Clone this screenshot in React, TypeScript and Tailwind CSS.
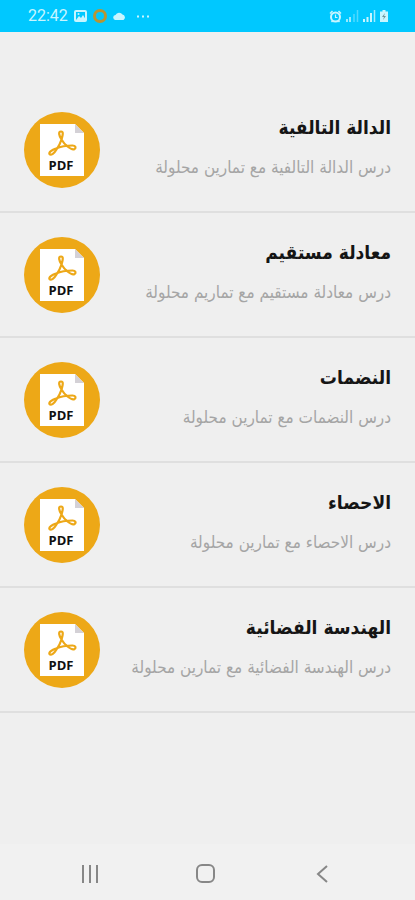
const lessons = [
  { title: "الدالة التالفية", detail: "درس الدالة التالفية مع تمارين محلولة" },
  { title: "معادلة مستقيم", detail: "درس معادلة مستقيم مع تماريم محلولة" },
  { title: "النضمات", detail: "درس النضمات مع تمارين محلولة" },
  { title: "الاحصاء", detail: "درس الاحصاء مع تمارين محلولة" },
  { title: "الهندسة الفضائية", detail: "درس الهندسة الفضائية مع تمارين محلولة" },
];

function PdfIcon() {
  return (
    <svg className="size-[76px] shrink-0" viewBox="0 0 76 76" aria-hidden="true">
      <circle cx="38" cy="38" r="38" fill="#eda817" />
      <path d="M16 12H51L60 21V64H16Z" fill="#fff" />
      <path d="M51 12L60 21H51Z" fill="#d4d1d6" />
      <path
        d="M37.500 27.500C39 30 41 32.500 43.500 34.500C46 36.500 49 38 50.500 37C52.500 35.500 51.500 33.500 48.500 33.500C44 33.500 36.500 34.500 32 36.500C28 38 24.500 40 25.500 42C27 44 30.500 41 32.500 37.500C34.500 34.500 36.500 31 37.500 27.500C38.500 24 40 19.500 37 19.500C34 19.500 35 23.500 37.500 27.500Z"
        fill="none"
        stroke="#eda817"
        strokeWidth="2.200"
        strokeLinejoin="round"
      />
      <text x="37" y="58" textAnchor="middle" fontSize="13" fill="#111" className="font-['Open_Sans',sans-serif] font-bold">
        PDF
      </text>
    </svg>
  );
}

function StatusBar() {
  return (
    <header className="flex h-8 shrink-0 items-center justify-between bg-[#00c8ff] pr-[27px] pl-7 text-[#c8f5ff]">
      <div className="flex items-center gap-1.5">
        <span className="font-[Roboto,sans-serif] text-base leading-5">22:42</span>
        <svg className="h-3 w-[13px]" viewBox="0 0 13 12" aria-hidden="true">
          <rect x="1" y="1" width="11" height="10" rx="1" fill="none" stroke="currentColor" strokeWidth="2" />
          <path d="M2 10L5 6L7 8L9 5L12 10Z" fill="currentColor" />
          <circle cx="4.500" cy="4" r="1" fill="currentColor" />
        </svg>
        <svg className="size-[14px]" viewBox="0 0 14 14" aria-hidden="true">
          <circle cx="7" cy="7" r="5.500" fill="none" stroke="#b59535" strokeWidth="3" />
        </svg>
        <svg className="h-2 w-[13px]" viewBox="0 0 13 8" aria-hidden="true">
          <path d="M3 8A2.500 2.500 0 0 1 2.500 3A4 4 0 0 1 9.500 2.500A3 3 0 0 1 10.500 8Z" fill="currentColor" />
        </svg>
        <svg className="ml-1 h-[3px] w-[14px]" viewBox="0 0 14 3" aria-hidden="true">
          <path d="M1 1.500H3M6 1.500H8M11 1.500H13" stroke="currentColor" strokeWidth="2" />
        </svg>
      </div>
      <div className="flex items-center gap-1">
        <svg className="size-[13px]" viewBox="0 0 13 13" aria-hidden="true">
          <circle cx="6.500" cy="7" r="4.500" fill="none" stroke="currentColor" strokeWidth="2" />
          <path d="M1 3.500L3.500 1M12 3.500L9.500 1M2.500 12L4 10.500M10.500 12L9 10.500" stroke="currentColor" strokeWidth="1.500" />
          <path d="M6.500 4.500V7.500H8.500" fill="none" stroke="currentColor" strokeWidth="1.200" />
        </svg>
        <svg className="h-3 w-[13px]" viewBox="0 0 13 12" aria-hidden="true">
          <path d="M1 9V12M4 7V12" stroke="currentColor" strokeWidth="1.500" />
          <path d="M8 4V12M11.500 0V12" stroke="currentColor" strokeWidth="1.500" opacity="0.4" />
        </svg>
        <svg className="h-3 w-[13px]" viewBox="0 0 13 12" aria-hidden="true">
          <path d="M1 9V12M4.500 7V12M8 3V12" stroke="currentColor" strokeWidth="2" />
          <path d="M11.500 0V12" stroke="currentColor" strokeWidth="1.500" opacity="0.8" />
        </svg>
        <svg className="h-3 w-2" viewBox="0 0 8 12" aria-hidden="true">
          <path d="M2.500 0H5.500V1.500H8V12H0V1.500H2.500Z" fill="currentColor" />
          <path d="M5 3L2 7H4L3 10L6 6H4Z" fill="#6f9499" />
        </svg>
      </div>
    </header>
  );
}

function NavigationBar() {
  return (
    <nav className="flex h-14 shrink-0 items-center justify-around bg-[#f1f1f1] px-8 pt-1 text-[#878787]">
      <button type="button" aria-label="Recent apps">
        <svg className="size-6" viewBox="0 0 24 24" fill="none" stroke="currentColor" strokeWidth="2" aria-hidden="true">
          <path d="M4 3V21M11 3V21M18 3V21" />
        </svg>
      </button>
      <button type="button" aria-label="Home">
        <svg className="size-6" viewBox="0 0 24 24" fill="none" stroke="currentColor" strokeWidth="2" aria-hidden="true">
          <rect x="1" y="3" width="17" height="17" rx="5" />
        </svg>
      </button>
      <button type="button" aria-label="Back">
        <svg className="size-6" viewBox="0 0 24 24" fill="none" stroke="currentColor" strokeWidth="2" aria-hidden="true">
          <path d="M14 4L5 12L14 20" />
        </svg>
      </button>
    </nav>
  );
}

export default function App() {
  return (
    <div className="flex min-h-screen flex-col bg-[#efefef]">
      <StatusBar />
      <main className="flex-1 pt-14">
        <ul>
          {lessons.map((lesson) => (
            <li key={lesson.title} className="border-b-2 border-[#dfdfdf]">
              <button type="button" className="flex h-[123px] w-full items-center justify-between px-6">
                <PdfIcon />
                <span dir="rtl" lang="ar" className="flex flex-col gap-2.5 pb-2 text-right font-['DejaVu_Sans_Condensed','DejaVu_Sans',sans-serif]">
                  <span className="text-[19px] leading-8 font-bold text-[#151515]">{lesson.title}</span>
                  <span className="text-[17px] leading-7 text-[#a5a5a5]">{lesson.detail}</span>
                </span>
              </button>
            </li>
          ))}
        </ul>
      </main>
      <NavigationBar />
    </div>
  );
}
